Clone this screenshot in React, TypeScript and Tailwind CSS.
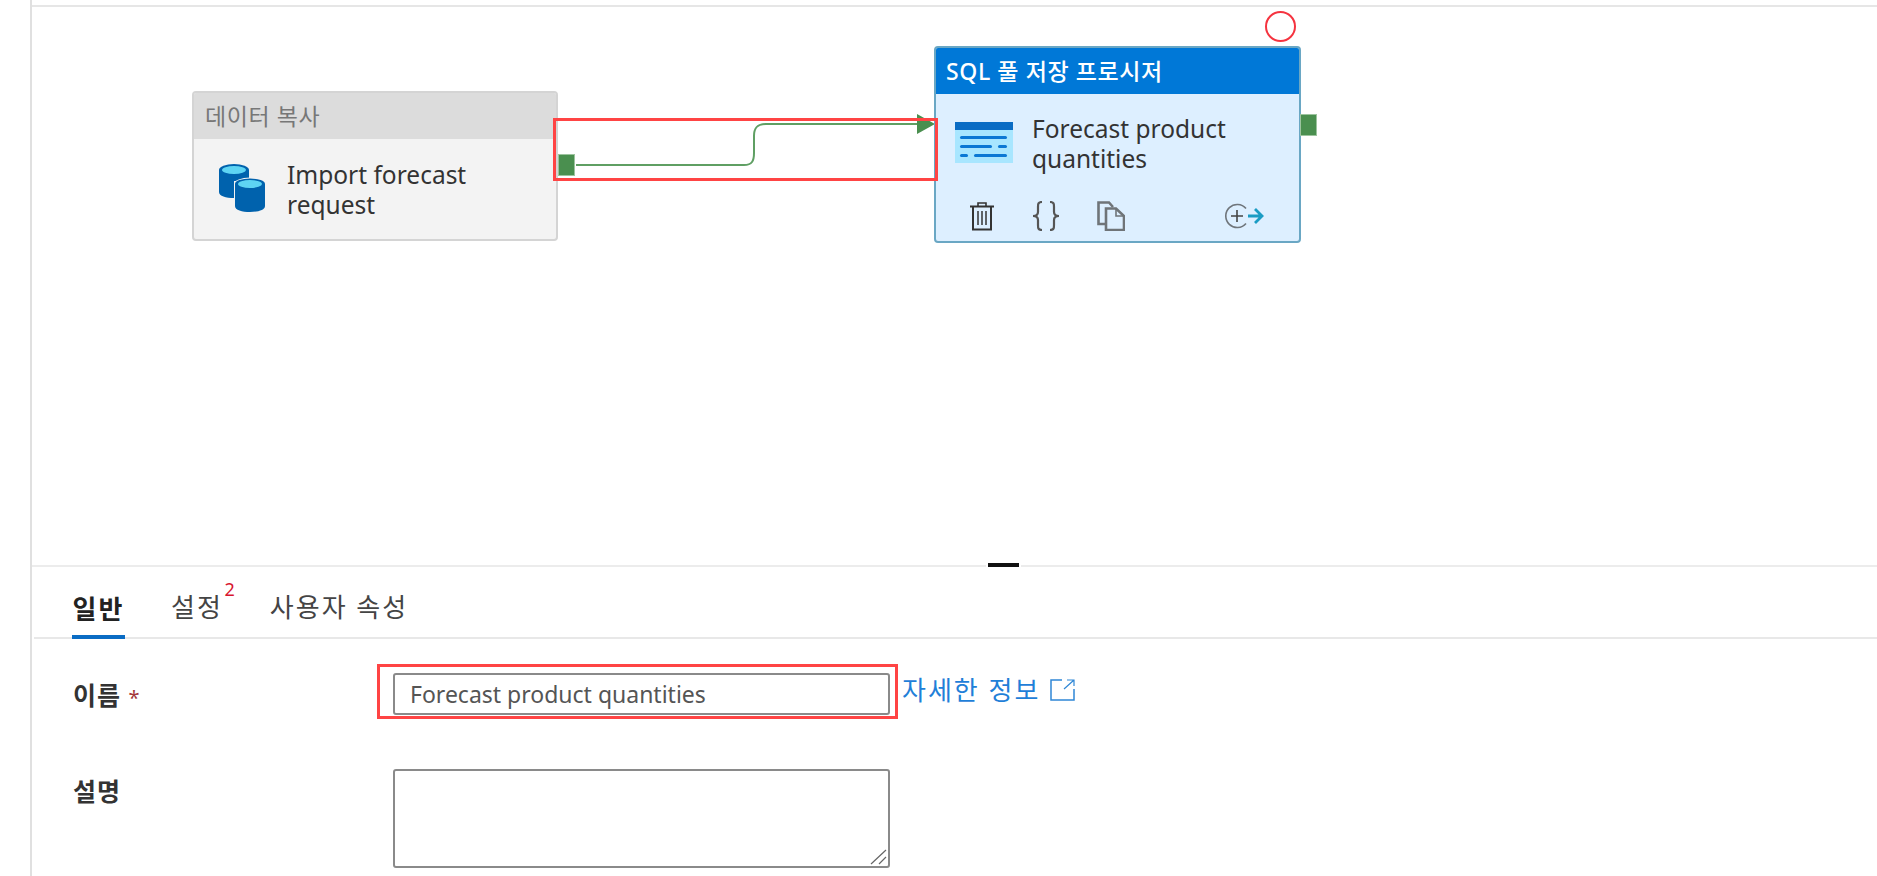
import React from "react";

const sans = "font-['Noto_Sans','Noto_Sans_CJK_KR',sans-serif]";

const CopyIcon = () => (
	<svg width="50" height="50" viewBox="0 0 50 50" className="shrink-0">
		<ellipse cx="16" cy="7" rx="15" ry="6" fill="#0062ad" />
		<path d="M1 7 V29 C1 33 8 35 16 35 V18 H31 V7 Z" fill="#0062ad" />
		<ellipse cx="16" cy="7" rx="12" ry="4" fill="#5ed4f3" />
		<ellipse cx="32" cy="21" rx="16" ry="6.5" fill="#f3f3f3" />
		<path d="M17 21 V43 C17 47 24 49 32 49 C40 49 47 47 47 43 V21 Z" fill="#0062ad" />
		<ellipse cx="32" cy="21" rx="15" ry="5.5" fill="#0062ad" />
		<ellipse cx="32" cy="21" rx="12" ry="4" fill="#5ed4f3" />
	</svg>
);

const ProcIcon = () => (
	<svg width="58" height="42" viewBox="0 0 58 42" className="shrink-0">
		<rect x="0" y="0" width="58" height="41" fill="#a8e6ff" />
		<rect x="0" y="0" width="58" height="8" fill="#0a6cc4" />
		<rect x="5" y="14" width="47" height="3" rx="1.5" fill="#0a78d4" />
		<rect x="5" y="23" width="32" height="3" rx="1.5" fill="#0a78d4" />
		<rect x="43" y="23" width="9" height="3" rx="1.5" fill="#0a78d4" />
		<rect x="5" y="32" width="8" height="3" rx="1.5" fill="#0a78d4" />
		<rect x="19" y="32" width="33" height="3" rx="1.5" fill="#0a78d4" />
	</svg>
);

const TrashIcon = () => (
	<svg width="26" height="30" viewBox="0 0 26 30" fill="none" stroke="#333" strokeWidth="2">
		<path d="M1 5.5 H25" />
		<path d="M9 5 V2 H17 V5" strokeWidth="1.6" />
		<path d="M4 6 V28.5 H22 V6" />
		<path d="M9 10 V24 M13 10 V24 M17 10 V24" strokeWidth="1.5" />
	</svg>
);

const BracesIcon = () => (
	<svg width="28" height="30" viewBox="0 0 28 30" fill="none" stroke="#555" strokeWidth="2.2">
		<path d="M10 1 C6 1 6 3 6 6 V11 C6 14 4 15 1 15 C4 15 6 16 6 19 V24 C6 27 6 29 10 29" />
		<path d="M18 1 C22 1 22 3 22 6 V11 C22 14 24 15 27 15 C24 15 22 16 22 19 V24 C22 27 22 29 18 29" />
	</svg>
);

const CloneIcon = () => (
	<svg width="28" height="30" viewBox="0 0 28 30" fill="none" stroke="#6f7478" strokeWidth="2.6">
		<path d="M9 23 H1.5 V1.5 H12 L16 6" />
		<path d="M9 7.5 H19 L27 15 V29 H9 Z" fill="#ddefff" />
		<path d="M19 8 V15 H27" strokeWidth="1.6" />
	</svg>
);

const AddOutIcon = () => (
	<svg width="40" height="26" viewBox="0 0 40 26" fill="none">
		<path d="M21 5.5 A11.5 11.5 0 1 0 21 20.5" stroke="#70767c" strokeWidth="1.6" />
		<path d="M6 13 H18 M12 7 V19" stroke="#444" strokeWidth="1.6" />
		<path d="M23 13 H37 M30 6 L37 13 L30 20" stroke="#1a9cc4" strokeWidth="2.8" />
	</svg>
);

const ExternalIcon = () => (
	<svg width="25" height="22" viewBox="0 0 25 22" fill="none" stroke="#2f87d6" strokeWidth="1.5">
		<path d="M12 1 H1 V21 H24 V10" />
		<path d="M14 10 L24 1 M17 1 H24 V7" strokeWidth="1.2" />
	</svg>
);

const Port = ({ className }: { className: string }) => (
	<div className={`absolute w-[17px] h-[22px] bg-[#4a8f4f] border border-[#9cc49e] ${className}`} />
);

const Canvas = () => (
	<div className="relative h-[560px] border-b-2 border-[#ececec]">
		<div className="absolute left-[160px] top-[84px] w-[366px] h-[150px] rounded-[4px] border-2 border-[#d4d4d4] bg-[#f3f3f3] overflow-hidden">
			<div className={`h-[46px] bg-[#dcdcdc] pl-[11px] leading-[46px] text-[23px] tracking-[0.6px] text-[#777] ${sans}`}>
				데이터 복사
			</div>
			<div className="flex items-start pl-[24px] pt-[24px] gap-[19px]">
				<CopyIcon />
				<div className={`-mt-[3px] text-[24.5px] leading-[30px] text-[#333] ${sans}`}>
					Import forecast
					<br />
					request
				</div>
			</div>
		</div>
		<Port className="left-[526px] top-[147px]" />

		<svg width="390" height="70" viewBox="0 0 390 70" className="absolute left-[540px] top-[101px]" fill="none">
			<path d="M4 57 H172 C180 57 182 53 182 45 V28 C182 19 186 16 194 16 H350" stroke="#5f9f63" strokeWidth="2" />
			<path d="M345 6 L363 16 L345 26 Z" fill="#4a8f4f" />
		</svg>

		<div className="absolute left-[902px] top-[39px] w-[367px] h-[197px] rounded-[4px] border-2 border-[#6aa7c4] bg-[#ddefff] overflow-hidden">
			<div className={`h-[46px] bg-[#0078d7] pl-[10px] leading-[46px] text-[23px] tracking-[0.6px] font-medium text-white ${sans}`}>
				SQL 풀 저장 프로시저
			</div>
			<div className="flex items-start pl-[19px] pt-[28px] gap-[19px]">
				<ProcIcon />
				<div className={`-mt-[8px] text-[24.5px] leading-[30px] text-[#333] ${sans}`}>
					Forecast product
					<br />
					quantities
				</div>
			</div>
			<div className="flex items-center pl-[33px] pr-[34px] mt-[27px]">
				<TrashIcon />
				<div className="ml-[37px]">
					<BracesIcon />
				</div>
				<div className="ml-[37px]">
					<CloneIcon />
				</div>
				<div className="ml-auto">
					<AddOutIcon />
				</div>
			</div>
		</div>
		<Port className="left-[1268px] top-[107px]" />

		{/* review markup */}
		<div className="absolute left-[521px] top-[111px] w-[385px] h-[63px] border-[3px] border-[#ff4444]" />
		<div className="absolute left-[1233px] top-[4px] w-[31px] h-[31px] rounded-full border-2 border-[#f5333f]" />

		<div className="absolute left-[954px] -bottom-[2px] w-[35px] h-[4px] bg-[#111] border-x-2 border-white" />
	</div>
);

const Properties = () => (
	<div className={`flex-1 ${sans}`}>
		<div className="flex items-end h-[72px] pl-[38px] ml-[2px] border-b-2 border-[#e8e8e8] text-[26px] tracking-[2px] text-[#444]">
			<div className="w-[53px] h-[52px] -mb-[2px] border-b-[4px] border-[#0a6cc4] font-bold text-[#222] leading-[44px] text-center whitespace-nowrap">
				일반
			</div>
			<div className="relative ml-[46px] h-[52px] leading-[44px]">
				설정
				<span className="absolute -right-[12px] -top-[4px] text-[18px] tracking-normal leading-[16px] text-[#d8162f]">2</span>
			</div>
			<div className="ml-[47px] h-[52px] leading-[44px]">사용자 속성</div>
		</div>

		<div className="relative flex pl-[41px] pt-[34px]">
			<div className="w-[320px] text-[25px] tracking-[1px] leading-[44px] font-bold text-[#333]">
				이름 <span className="font-normal text-[20px] text-[#a4373a]">*</span>
			</div>
			<input
				readOnly
				value="Forecast product quantities"
				className="w-[497px] h-[42px] rounded-[3px] border-2 border-[#8a8a8a] pl-[15px] text-[23px] text-[#555] outline-none"
			/>
			<a className="ml-[12px] -mt-[3px] flex items-center gap-[10px] h-[40px] text-[26px] tracking-[2px] text-[#1f80d8]">
				자세한 정보 <ExternalIcon />
			</a>
			{/* review markup */}
			<div className="absolute left-[345px] top-[25px] w-[521px] h-[55px] border-[3px] border-[#ff4444]" />
		</div>

		<div className="flex pl-[41px] pt-[49px]">
			<div className="w-[320px] text-[25px] tracking-[1px] leading-[45px] font-bold text-[#333]">설명</div>
			<div className="relative w-[497px] h-[99px]">
				<textarea
					readOnly
					className="block w-full h-full resize-none rounded-[3px] border-2 border-[#8a8a8a] outline-none"
				/>
				<svg width="18" height="16" viewBox="0 0 18 16" className="absolute right-[2px] bottom-[3px]" fill="none" stroke="#666" strokeWidth="1.2">
					<path d="M1 15 L16 1 M9 15 L16 8" />
				</svg>
			</div>
		</div>
	</div>
);

export default function App() {
	return (
		<div className="w-full h-[876px] overflow-hidden bg-white flex">
			<div className="w-[32px] shrink-0 border-r-2 border-[#e0e0e0]" />
			<div className="flex-1 flex flex-col pt-[5px]">
				<div className="h-[2px] bg-[#e6e6e6]" />
				<Canvas />
				<Properties />
			</div>
		</div>
	);
}
